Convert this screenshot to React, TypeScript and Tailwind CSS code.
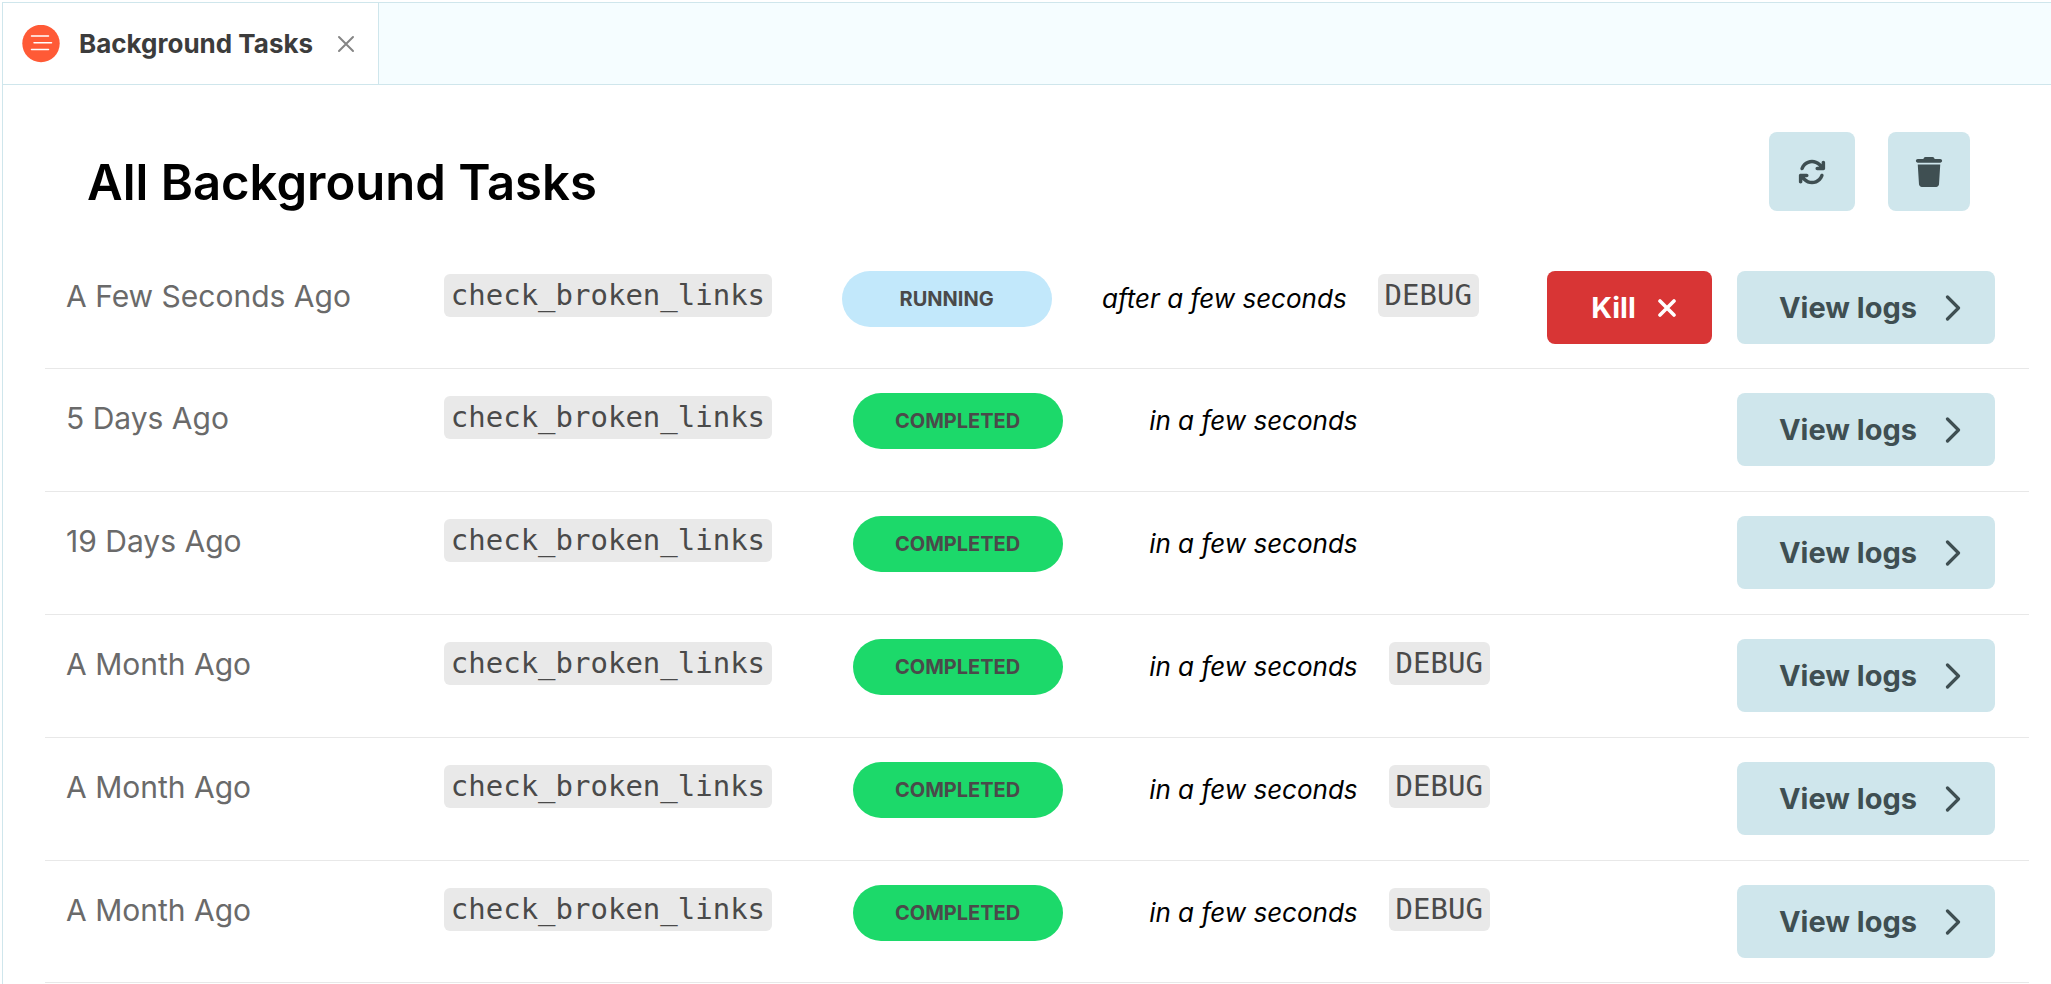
import { FaArrowsRotate, FaTrash } from "react-icons/fa6";

type Task = {
  started: string;
  name: string;
  status: "running" | "completed";
  duration: string;
  debug: boolean;
};

const tasks: Task[] = [
  { started: "A Few Seconds Ago", name: "check_broken_links", status: "running", duration: "after a few seconds", debug: true },
  { started: "5 Days Ago", name: "check_broken_links", status: "completed", duration: "in a few seconds", debug: false },
  { started: "19 Days Ago", name: "check_broken_links", status: "completed", duration: "in a few seconds", debug: false },
  { started: "A Month Ago", name: "check_broken_links", status: "completed", duration: "in a few seconds", debug: true },
  { started: "A Month Ago", name: "check_broken_links", status: "completed", duration: "in a few seconds", debug: true },
  { started: "A Month Ago", name: "check_broken_links", status: "completed", duration: "in a few seconds", debug: true },
];

function TabIcon() {
  return (
    <svg viewBox="0 0 38 38" className="size-[38px] shrink-0" aria-hidden="true">
      <circle cx="19" cy="18.5" r="18.7" fill="#ff5a36" />
      <g stroke="#fff" strokeWidth="1.5" strokeLinecap="round">
        <path d="M9.5 11H26.5" />
        <path d="M12 17.8H29.5" />
        <path d="M9.5 24.5H26.5" />
      </g>
    </svg>
  );
}

function Cross({ className, width }: { className: string; width: number }) {
  return (
    <svg viewBox="0 0 18 18" className={className} fill="none" stroke="currentColor" strokeWidth={width} strokeLinecap="round" aria-hidden="true">
      <path d="M2 2L16 16M16 2L2 16" />
    </svg>
  );
}

function Chevron() {
  return (
    <svg viewBox="0 0 16 26" className="h-[26px] w-4" fill="none" stroke="currentColor" strokeWidth="3.2" strokeLinecap="round" strokeLinejoin="round" aria-hidden="true">
      <path d="M2.5 2L13.5 13L2.5 24" />
    </svg>
  );
}

function Code({ children }: { children: string }) {
  return (
    <code className="inline-block h-[43px] rounded-md bg-[#e9e9e9] px-[7px] font-['DejaVu_Sans_Mono',monospace] text-[29px] leading-[43px] whitespace-nowrap text-[#4a4a4a]">
      {children}
    </code>
  );
}

function StatusPill({ status }: { status: Task["status"] }) {
  const tone = status === "running" ? "bg-[#c2e8fb]" : "bg-[#1cd96a]";
  return (
    <span className={`flex h-14 w-[210px] shrink-0 items-center justify-center rounded-full text-[20px] font-bold text-[#4a4a4a] uppercase ${tone}`}>
      {status}
    </span>
  );
}

function TaskRow({ task }: { task: Task }) {
  const running = task.status === "running";
  return (
    <tr className="group align-top *:border-b *:border-[#e8e8e8]">
      <td className="w-1/5 pt-6 pl-[21px] text-[30px] leading-[50px] whitespace-nowrap text-[#6a6a6a]">{task.started}</td>
      <td className="w-1/5 pt-[27px] pl-0.5">
        <Code>{task.name}</Code>
      </td>
      <td className={running ? "pt-6 pl-[3px]" : "pt-6 pl-3.5"}>
        <div className="flex items-start">
          <StatusPill status={task.status} />
          <em className="mr-[31px] w-[295px] text-right text-[26px] leading-[56px] whitespace-nowrap text-black">{task.duration}</em>
          {task.debug && (
            <span className="pt-[3px]">
              <Code>DEBUG</Code>
            </span>
          )}
        </div>
      </td>
      <td className="pt-6 pr-[34px] pb-[25px] group-first:pb-6 group-last:pb-6">
        <div className="flex justify-end gap-[25px] text-[29px] font-bold whitespace-nowrap">
          {running && (
            <button type="button" className="flex h-[73px] w-[165px] items-center justify-center gap-[22px] rounded-lg bg-[#d83535] pl-2 text-white">
              Kill
              <Cross className="size-[18px]" width={3.6} />
            </button>
          )}
          <button type="button" className="flex h-[73px] w-[258px] items-center justify-center gap-7 rounded-lg bg-[#cfe6ec] pl-2 text-[#3f4f52]">
            View logs
            <Chevron />
          </button>
        </div>
      </td>
    </tr>
  );
}

export default function App() {
  return (
    <div className="flex min-h-screen flex-col bg-white pt-0.5 pl-0.5 font-['Inter',sans-serif]">
      <div className="grow border-t border-l border-[#cfe6ec]">
        <nav className="flex border-b border-[#cfe6ec] bg-[#f5fdff]">
          <div className="flex h-[81px] items-center border-r border-[#cfe6ec] bg-white pr-[23px] pl-[19px]">
            <TabIcon />
            <a href="#tasks" className="ml-[19px] text-[26px] font-bold text-[#3c3c3c]">
              Background Tasks
            </a>
            <button type="button" aria-label="Close tab" className="ml-6 text-[#858585]">
              <Cross className="size-[18px]" width={2} />
            </button>
          </div>
        </nav>
        <main id="tasks" className="pr-[22px] pl-[42px]">
          <header className="flex items-start justify-between pt-[47px] pr-[59px] pb-[34px] pl-[42px]">
            <h1 className="pt-[21px] text-[49px] leading-[60px] font-semibold text-black">All Background Tasks</h1>
            <div className="flex gap-[33px] text-[#3f4f52]">
              <button type="button" aria-label="Refresh" className="flex h-[79px] w-[86px] items-center justify-center rounded-lg bg-[#cfe6ec]">
                <FaArrowsRotate className="size-7" />
              </button>
              <button type="button" aria-label="Delete" className="flex h-[79px] w-[82px] items-center justify-center rounded-lg bg-[#cfe6ec]">
                <FaTrash className="size-[30px]" />
              </button>
            </div>
          </header>
          <table className="w-full border-separate border-spacing-0">
            <tbody>
              {tasks.map((task, i) => (
                <TaskRow key={i} task={task} />
              ))}
            </tbody>
          </table>
        </main>
      </div>
    </div>
  );
}
